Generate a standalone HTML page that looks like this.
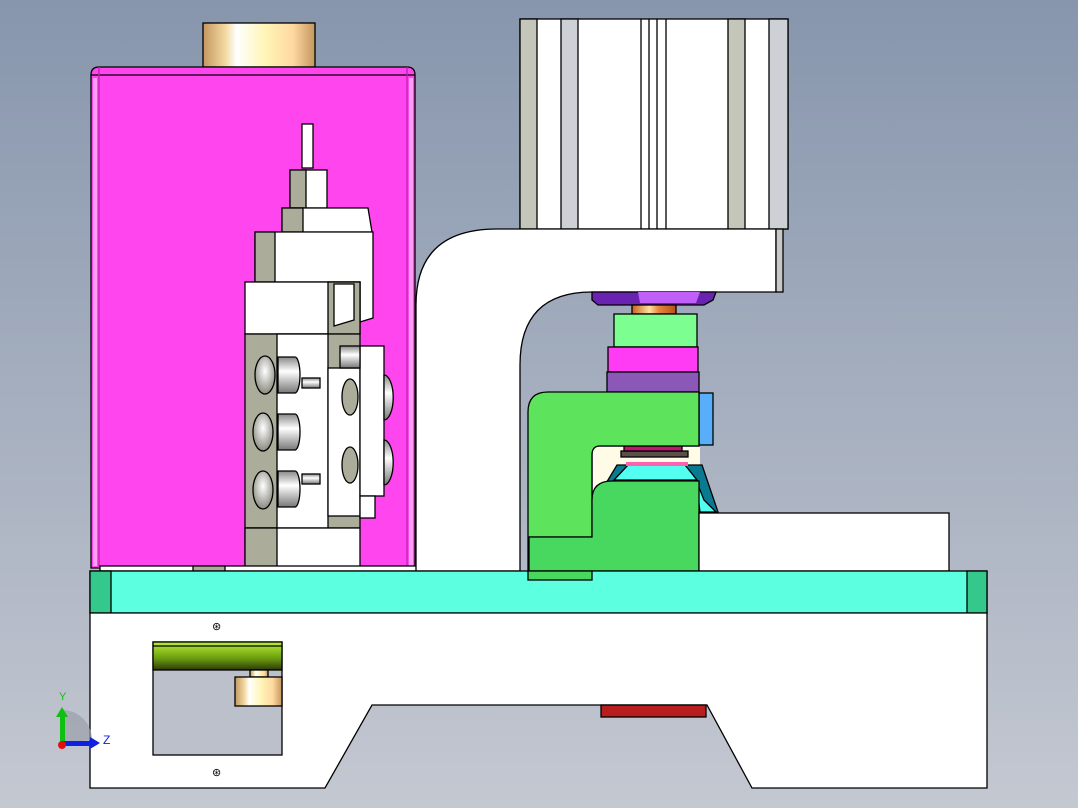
<!DOCTYPE html>
<html><head><meta charset="utf-8"><style>
html,body{margin:0;padding:0;width:1078px;height:808px;overflow:hidden}
svg{display:block}
</style></head><body>
<svg width="1078" height="808" viewBox="0 0 1078 808" xmlns="http://www.w3.org/2000/svg" stroke="#000" stroke-width="1.3">
<defs>
<linearGradient id="bg" x1="0" y1="0" x2="0" y2="1"><stop offset="0" stop-color="#8796ad"/><stop offset="1" stop-color="#c4c8d1"/></linearGradient>
<linearGradient id="cu" x1="0" y1="0" x2="1" y2="0"><stop offset="0" stop-color="#c49660"/><stop offset="0.2" stop-color="#f2d9a0"/><stop offset="0.3" stop-color="#ffffff"/><stop offset="0.55" stop-color="#fff5b8"/><stop offset="0.8" stop-color="#ffd9a0"/><stop offset="1" stop-color="#c49660"/></linearGradient>
<linearGradient id="or" x1="0" y1="0" x2="1" y2="0"><stop offset="0" stop-color="#c8601c"/><stop offset="0.4" stop-color="#ffe0a0"/><stop offset="0.6" stop-color="#e8883c"/><stop offset="1" stop-color="#b8501a"/></linearGradient>
<linearGradient id="lime" x1="0" y1="0" x2="0" y2="1"><stop offset="0" stop-color="#b8f030"/><stop offset="0.6" stop-color="#6a9a10"/><stop offset="1" stop-color="#2c3a08"/></linearGradient>
<radialGradient id="hole" cx="0.5" cy="0.4" r="0.6"><stop offset="0" stop-color="#fff"/><stop offset="1" stop-color="#8a8a80"/></radialGradient>
<linearGradient id="cyl" x1="0" y1="0" x2="0" y2="1"><stop offset="0" stop-color="#888"/><stop offset="0.4" stop-color="#fff"/><stop offset="1" stop-color="#777"/></linearGradient>
</defs>
<rect width="1078" height="808" fill="url(#bg)" stroke="none"/>

<!-- copper top cylinder -->
<rect x="203" y="23" width="112" height="44" fill="url(#cu)"/>
<!-- pink box -->
<path d="M91 75 Q91 67 99 67 L407 67 Q415 67 415 75 L415 568 L91 568 Z" fill="#ff46ee"/>
<line x1="91" y1="75" x2="415" y2="75"/>
<line x1="99" y1="67" x2="99" y2="568" stroke="#c020b0"/>
<line x1="407" y1="67" x2="407" y2="568" stroke="#c020b0"/>
<rect x="93" y="78" width="4" height="488" fill="#ff9cf4" stroke="none"/>
<rect x="409" y="78" width="4" height="488" fill="#ff9cf4" stroke="none"/>

<!-- valve assembly -->
<rect x="302" y="124" width="11" height="44" fill="#fff"/>
<rect x="290" y="170" width="37" height="38" fill="#fff"/>
<rect x="290" y="170" width="16" height="38" fill="#acac9a"/>
<path d="M282 208 L368 208 L372 232 L282 232 Z" fill="#fff"/>
<rect x="282" y="208" width="21" height="24" fill="#acac9a"/>
<path d="M255 232 L373 232 L373 318 L360 322 L360 282 L255 282 Z" fill="#fff"/>
<rect x="255" y="232" width="20" height="50" fill="#acac9a"/>
<rect x="245" y="282" width="115" height="52" fill="#fff"/>
<rect x="328" y="282" width="32" height="52" fill="#acac9a"/>
<path d="M334 284 L354 284 L354 320 L334 326 Z" fill="#fff"/>
<rect x="245" y="334" width="115" height="194" fill="#acac9a"/>
<rect x="277" y="334" width="51" height="194" fill="#fff"/>
<rect x="328" y="368" width="32" height="148" fill="#fff"/>
<rect x="245" y="528" width="115" height="40" fill="#fff"/>
<rect x="245" y="528" width="32" height="40" fill="#acac9a"/>
<rect x="360" y="346" width="24" height="150" fill="#fff"/>
<rect x="340" y="346" width="20" height="22" fill="url(#cyl)"/>
<ellipse cx="265" cy="375" rx="10" ry="19" fill="url(#hole)"/>
<ellipse cx="263" cy="432" rx="10" ry="19" fill="url(#hole)"/>
<ellipse cx="263" cy="490" rx="10" ry="19" fill="url(#hole)"/>
<path d="M278 357 L295 357 A5 18 0 0 1 295 393 L278 393 Z" fill="url(#cyl)"/>
<path d="M278 414 L295 414 A5 18 0 0 1 295 450 L278 450 Z" fill="url(#cyl)"/>
<path d="M278 471 L295 471 A5 18 0 0 1 295 507 L278 507 Z" fill="url(#cyl)"/>
<rect x="302" y="378" width="18" height="10" fill="url(#cyl)"/>
<rect x="302" y="474" width="18" height="10" fill="url(#cyl)"/>
<ellipse cx="350" cy="397" rx="8" ry="18" fill="#acac9a"/>
<ellipse cx="350" cy="465" rx="8" ry="18" fill="#acac9a"/>
<path d="M384 375 A9 22 0 0 1 384 420 Z" fill="url(#cyl)"/>
<path d="M384 440 A9 22 0 0 1 384 485 Z" fill="url(#cyl)"/>
<rect x="360" y="496" width="15" height="22" fill="#fff"/>

<!-- strip under pink -->
<rect x="100" y="566" width="322" height="5" fill="#fff"/>
<rect x="193" y="566" width="32" height="5" fill="#acac9a"/>

<!-- motor -->
<rect x="520" y="19" width="268" height="210" fill="#fff"/>
<rect x="520" y="19" width="17" height="210" fill="#c3c6b8"/>
<rect x="561" y="19" width="17" height="210" fill="#cdd0d5"/>
<rect x="728" y="19" width="17" height="210" fill="#c3c6b8"/>
<rect x="769" y="19" width="19" height="210" fill="#cdd0d5"/>
<line x1="641" y1="19" x2="641" y2="229"/><line x1="649" y1="19" x2="649" y2="229"/><line x1="657" y1="19" x2="657" y2="229"/><line x1="666" y1="19" x2="666" y2="229"/>

<!-- C frame -->
<path d="M416 571 L416 305 Q416 229 497 229 L776 229 L776 292 L592 292 Q520 292 520 365 L520 571 Z" fill="#fff"/>
<rect x="776" y="229" width="7" height="63" fill="#c8c8c8"/>

<!-- purple nut / copper -->
<path d="M592 292 L716 292 L713 300 L704 305 L598 305 L592 300 Z" fill="#6a22b0"/>
<path d="M638 292 L670 292 L700 292 L696 303 L640 303 Z" fill="#c060f8" stroke="none"/>
<rect x="632" y="305" width="44" height="9" fill="url(#or)"/>
<rect x="614" y="314" width="83" height="33" fill="#7cff90"/>
<rect x="608" y="347" width="90" height="25" fill="#ff3cf4"/>
<rect x="607" y="372" width="92" height="20" fill="#8c58b8"/>
<rect x="699" y="393" width="14" height="52" fill="#58aef8"/>

<!-- gap area -->
<path d="M593 447 L700 447 L700 515 L593 515 Z" fill="#fffbe6" stroke="none"/>
<path d="M602 490 L617 465 L702 465 L718 512 L700 512 L693 480 Z" fill="#0a7a90"/>
<path d="M628 465 L685 465 L697 480 L614 480 Z" fill="#52fff0"/>
<path d="M696 480 L704 500 L716 512 L700 512 Z" fill="#52fff0"/>
<rect x="626" y="462" width="62" height="4" fill="#ff60b0" stroke="none"/>
<rect x="621" y="451" width="67" height="6" fill="#5a5048"/>
<rect x="624" y="446" width="58" height="5" fill="#c01870"/>

<!-- green bracket -->
<path d="M528 572 L528 412 Q528 392 548 392 L699 392 L699 446 L600 446 Q592 446 592 455 L592 537 L528 537 Z" fill="#5ee45c"/>
<path d="M529 537 L592 537 L592 500 Q592 481 612 481 L699 481 L699 571 L592 571 L592 580 L529 580 Z" fill="#48d860"/>
<rect x="699" y="513" width="250" height="58" fill="#fff"/>

<!-- teal plate -->
<rect x="90" y="571" width="897" height="42" fill="#5cffe0"/>
<rect x="90" y="571" width="21" height="42" fill="#34c88c"/>
<rect x="967" y="571" width="20" height="42" fill="#34c88c"/>
<rect x="528" y="571" width="64" height="9" fill="#48d860"/>

<!-- base -->
<path d="M90 613 L987 613 L987 788 L752 788 L707 705 L372 705 L325 788 L90 788 Z" fill="#fff"/>
<rect x="601" y="705" width="105" height="12" fill="#b81e1e"/>
<rect x="153" y="642" width="129" height="113" fill="#bcc0cb"/>
<rect x="153" y="642" width="129" height="28" fill="url(#lime)"/>
<line x1="153" y1="646" x2="282" y2="646"/>
<rect x="250" y="670" width="18" height="7" fill="url(#cu)"/>
<rect x="235" y="677" width="47" height="29" fill="url(#cu)"/>
<text x="212" y="630" font-family="Liberation Sans" font-size="11" stroke="none">⊛</text>
<text x="212" y="776" font-family="Liberation Sans" font-size="11" stroke="none">⊛</text>

<!-- axis triad -->
<path d="M62 743 L62 710 A30 30 0 0 1 92 740 Z" fill="#9aa0aa" stroke="none" opacity="0.7"/>
<rect x="60" y="715" width="5" height="28" fill="#10c010" stroke="none"/>
<path d="M56 717 L62 707 L68 717 Z" fill="#10c010" stroke="none"/>
<rect x="62" y="741" width="30" height="5" fill="#1020e0" stroke="none"/>
<path d="M90 737 L100 743 L90 749 Z" fill="#1020e0" stroke="none"/>
<circle cx="62" cy="745" r="4" fill="#e01010" stroke="none"/>
<text x="59" y="700" font-family="Liberation Sans" font-size="11" fill="#10c010" stroke="none">Y</text>
<text x="103" y="744" font-family="Liberation Sans" font-size="12" fill="#1020e0" stroke="none">Z</text>
</svg>
</body></html>
